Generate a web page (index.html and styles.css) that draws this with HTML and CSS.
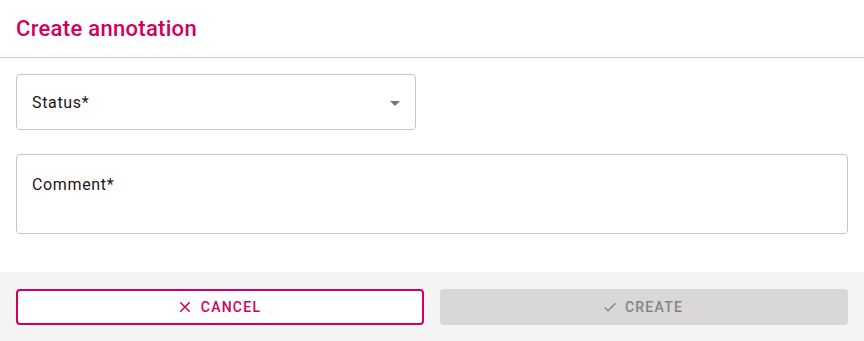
FILE: index.html
```html
<!DOCTYPE html>
<html>
<head>
<meta charset="utf-8">
<link rel="stylesheet" href="styles.css">
</head>
<body>
<div class="dialog">
  <header class="dialog-header">
    <h1 class="dialog-title">Create annotation</h1>
  </header>
  <div class="dialog-content">
    <div class="field select-field">
      <span class="field-label">Status*</span>
      <svg class="select-arrow" width="10" height="5" viewBox="0 0 10 5"><path d="M0 0 L10 0 L5 5 Z" fill="#757575"/></svg>
    </div>
    <div class="field textarea-field">
      <span class="field-label">Comment*</span>
    </div>
  </div>
  <footer class="dialog-actions">
    <button class="btn btn-cancel">
      <svg class="btn-icon" width="18" height="18" viewBox="0 0 24 24"><path d="M19 6.41L17.59 5 12 10.59 6.41 5 5 6.41 10.59 12 5 17.59 6.41 19 12 13.41 17.59 19 19 17.59 13.41 12z" fill="currentColor"/></svg>
      <span>Cancel</span>
    </button>
    <button class="btn btn-create" disabled>
      <svg class="btn-icon" width="16" height="16" viewBox="0 0 24 24"><path d="M9 16.17L4.83 12l-1.42 1.41L9 19 21 7l-1.41-1.41z" fill="currentColor"/></svg>
      <span>Create</span>
    </button>
  </footer>
</div>
</body>
</html>
```
FILE: styles.css
```css
html, body {
  margin: 0;
  padding: 0;
  background: #ffffff;
}
body {
  font-family: Roboto, "Liberation Sans", sans-serif;
  width: 864px;
  height: 341px;
  overflow: hidden;
}
.dialog {
  display: flex;
  flex-direction: column;
  height: 341px;
  background: #ffffff;
}
.dialog-header {
  height: 58px;
  box-sizing: border-box;
  border-bottom: 1px solid #f6bcd3;
  padding: 0 16px;
  display: flex;
  align-items: center;
}
.dialog-title {
  margin: 0;
  font-size: 22px;
  font-weight: 500;
  letter-spacing: 0.3px;
  color: #d1005d;
  line-height: 26px;
  padding-top: 1px;
}
.dialog-content {
  padding: 16px 16px 38px;
  display: flex;
  flex-direction: column;
  gap: 24px;
}
.field {
  box-sizing: border-box;
  border: 1px solid #c6c4c6;
  border-radius: 4px;
  padding: 0 15px;
  display: flex;
  color: #1f1418;
  font-size: 16px;
  letter-spacing: 0.65px;
}
.select-field {
  width: 400px;
  height: 56px;
  align-items: center;
  justify-content: space-between;
  padding-top: 2px;
}
.textarea-field {
  width: 832px;
  height: 80px;
  align-items: flex-start;
  padding-top: 20px;
}
.field-label {
  line-height: 20px;
}
.dialog-actions {
  flex: 1;
  background: #f5f3f4;
  padding: 17px 16px 16px;
  display: grid;
  grid-template-columns: 1fr 1fr;
  gap: 16px;
  align-items: start;
}
.btn {
  height: 36px;
  box-sizing: border-box;
  border-radius: 4px;
  font-family: Roboto, "Liberation Sans", sans-serif;
  font-size: 14px;
  font-weight: 500;
  letter-spacing: 1.25px;
  text-transform: uppercase;
  display: flex;
  align-items: center;
  justify-content: center;
  gap: 7px;
  padding: 0 3px 0 0;
  margin: 0;
}
.btn-cancel {
  background: #ffffff;
  border: 2px solid #d1005d;
  color: #d1005d;
}
.btn-create {
  background: #d9d7d8;
  border: none;
  color: #858384;
}
.btn-icon {
  flex: none;
}
```
